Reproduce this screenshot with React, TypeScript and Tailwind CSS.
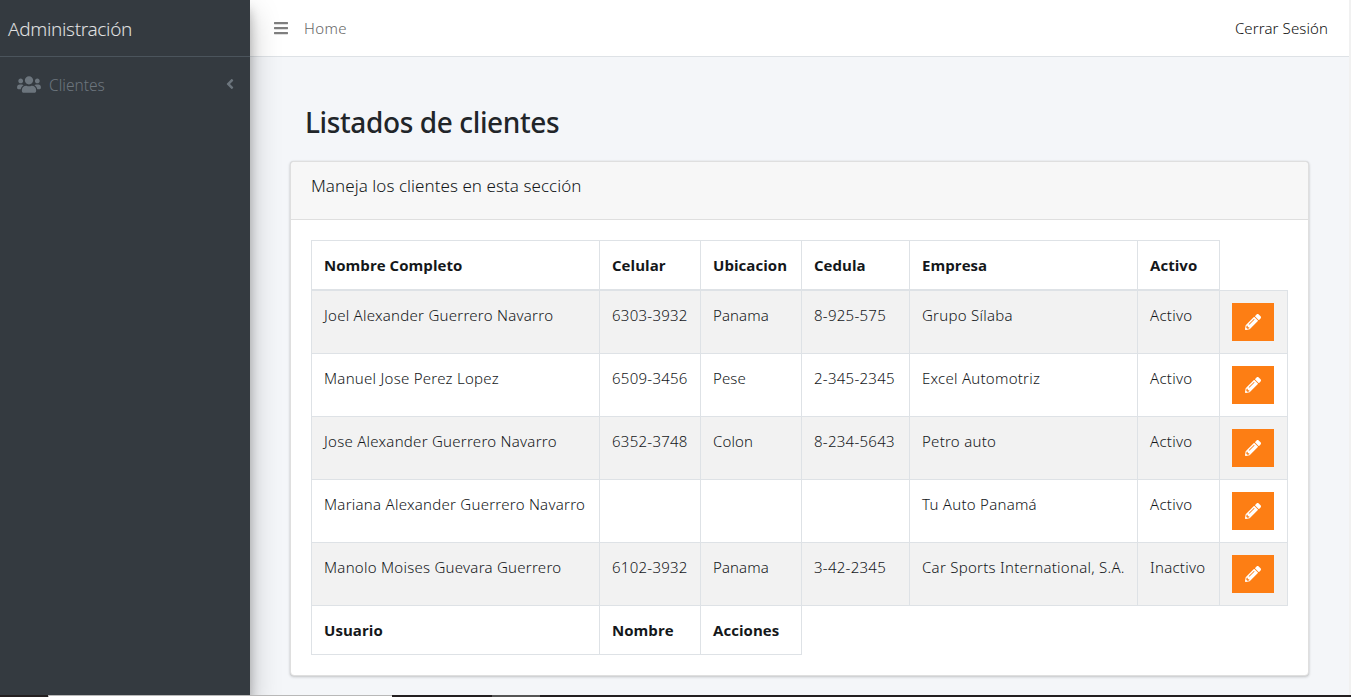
import { FaAngleLeft, FaBars, FaPencilAlt, FaUsers } from "react-icons/fa";

type Client = {
  name: string;
  phone: string;
  place: string;
  id: string;
  company: string;
  status: string;
};

const headings = ["Nombre Completo", "Celular", "Ubicacion", "Cedula", "Empresa", "Activo"];

const clients: Client[] = [
  { name: "Joel Alexander Guerrero Navarro", phone: "6303-3932", place: "Panama", id: "8-925-575", company: "Grupo Sílaba", status: "Activo" },
  { name: "Manuel Jose Perez Lopez", phone: "6509-3456", place: "Pese", id: "2-345-2345", company: "Excel Automotriz", status: "Activo" },
  { name: "Jose Alexander Guerrero Navarro", phone: "6352-3748", place: "Colon", id: "8-234-5643", company: "Petro auto", status: "Activo" },
  { name: "Mariana Alexander Guerrero Navarro", phone: "", place: "", id: "", company: "Tu Auto Panamá", status: "Activo" },
  { name: "Manolo Moises Guevara Guerrero", phone: "6102-3932", place: "Panama", id: "3-42-2345", company: "Car Sports International, S.A.", status: "Inactivo" },
];

function Sidebar() {
  return (
    <aside className="relative z-10 w-[250px] shrink-0 bg-[#343a40] shadow-[0_14px_28px_rgba(0,0,0,0.25),0_10px_10px_rgba(0,0,0,0.22)]">
      <div className="flex h-[57px] items-center border-b border-[#4b545c] pt-0.5 pl-2 text-[19px] font-light tracking-[-0.34px] text-white/85">
        Administración
      </div>
      <div className="flex h-[56px] items-center pl-[17px] pr-3 text-[#6c757d]">
        <FaUsers className="mb-0.5 h-[19px] w-6" />
        <span className="mt-px ml-2 text-[15.5px] font-light">Clientes</span>
        <FaAngleLeft className="mb-0.5 ml-auto size-4" />
      </div>
    </aside>
  );
}

function TopBar() {
  return (
    <header className="flex h-[57px] shrink-0 items-center border-b border-[#dee2e6] bg-white pl-[23px] pr-[21px]">
      <FaBars className="size-4 text-[#7f7f7f]" />
      <span className="ml-[15px] text-[15px] font-light tracking-[0.4px] text-[#666]">Home</span>
      <span className="ml-auto text-[15px] font-light tracking-[0.1px] text-[#111]">Cerrar Sesión</span>
    </header>
  );
}

function ClientTable() {
  const cell = "border-b border-l border-[#dee2e6] pl-3 pt-3 align-top whitespace-nowrap";
  const head = "border-l border-[#dee2e6] pl-3 text-left align-middle font-['Open_Sans'] font-bold whitespace-nowrap tracking-[0.05px]";
  return (
    <table className="w-[977px] table-fixed border-separate border-spacing-0 text-[15px] leading-6 font-light tracking-[0.26px] text-[#14171a]">
      <colgroup>
        <col className="w-[288px]" />
        <col className="w-[101px]" />
        <col className="w-[101px]" />
        <col className="w-[108px]" />
        <col className="w-[228px]" />
        <col className="w-[82px]" />
        <col className="w-[69px]" />
      </colgroup>
      <thead>
        <tr className="h-[51px]">
          {headings.map((h) => (
            <th key={h} className={`${head} border-t border-b-2`}>{h}</th>
          ))}
          <th className="border-b border-l border-[#dee2e6]" />
        </tr>
      </thead>
      <tbody>
        {clients.map((c) => (
          <tr key={c.name} className="h-[63px] odd:bg-[#f2f2f2]">
            <td className={cell}>{c.name}</td>
            <td className={cell}>{c.phone}</td>
            <td className={`${cell} tracking-[0.1px]`}>{c.place}</td>
            <td className={cell}>{c.id}</td>
            <td className={cell}>{c.company}</td>
            <td className={cell}>{c.status}</td>
            <td className={`${cell} border-r`}>
              <button className="flex h-[38px] w-[42px] items-center justify-center bg-[#fd7e14] text-white">
                <FaPencilAlt className="size-4" />
              </button>
            </td>
          </tr>
        ))}
      </tbody>
      <tfoot>
        <tr className="h-[49px]">
          <th className={`${head} border-b`}>Usuario</th>
          <th className={`${head} border-b`}>Nombre</th>
          <th className={`${head} border-b`}>Acciones</th>
          <td colSpan={4} className="border-l border-[#dee2e6]" />
        </tr>
      </tfoot>
    </table>
  );
}

function BottomEdge() {
  return (
    <div className="flex h-[2px] w-full bg-[#231f20]">
      <div className="ml-12 w-[344px] border-t border-l border-[#b8b8b8] bg-white" />
      <div className="ml-[100px] w-12 bg-[#555]" />
    </div>
  );
}

export default function App() {
  return (
    <div className="flex h-[697px] w-[1351px] flex-col overflow-hidden font-['Noto_Sans','Open_Sans',sans-serif]">
      <div className="flex h-[695px] overflow-hidden">
        <Sidebar />
        <div className="flex min-w-0 flex-1 flex-col bg-[#f4f6f9]">
          <TopBar />
          <main className="pl-10">
            <h1 className="mt-[47px] ml-[15px] h-9 text-[28px] leading-9 font-medium tracking-[-0.38px] text-[#212529]">
              Listados de clientes
            </h1>
            <section className="mt-[21px] h-[515px] w-[1019px] rounded border border-[#dfdfdf] bg-white shadow-[0_0_1px_rgba(0,0,0,0.125),0_1px_3px_rgba(0,0,0,0.2)]">
              <div className="h-[58px] rounded-t border-b border-[#dfdfdf] bg-[#f7f7f7] pt-3 pl-5 text-[17px] leading-6 font-light tracking-[0.05px] text-[#14171a]">
                Maneja los clientes en esta sección
              </div>
              <div className="pt-5 pl-5">
                <ClientTable />
              </div>
            </section>
          </main>
        </div>
        <div className="w-[2px] shrink-0 bg-[#f1f1f1]" />
      </div>
      <BottomEdge />
    </div>
  );
}
